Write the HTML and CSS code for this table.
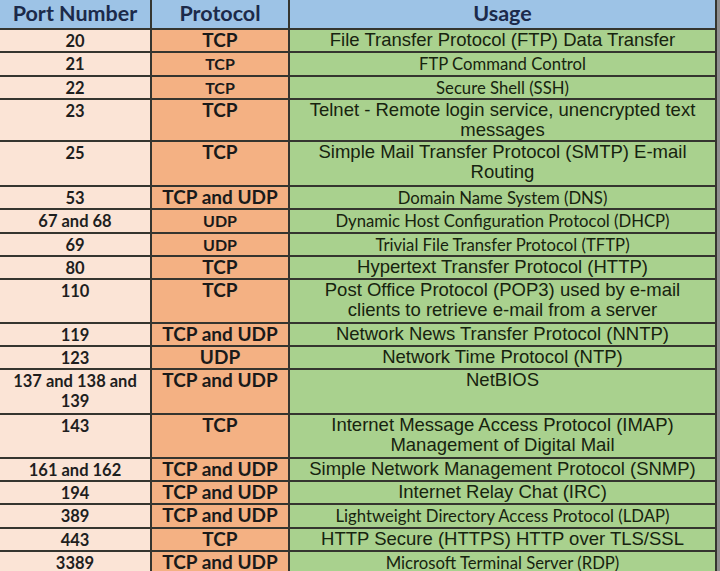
FILE: index.html
```html
<!DOCTYPE html>
<html>
<head>
<meta charset="utf-8">
<link rel="stylesheet" href="styles.css">
</head>
<body>
<table class="ports">
  <colgroup>
    <col class="c-port">
    <col class="c-proto">
    <col class="c-use">
  </colgroup>
  <thead>
    <tr class="head">
      <th class="port">Port Number</th>
      <th class="proto">Protocol</th>
      <th class="use">Usage</th>
    </tr>
  </thead>
  <tbody>
    <tr class="r1"><td class="port">20</td><td class="proto big">TCP</td><td class="use arial">File Transfer Protocol (FTP) Data Transfer</td></tr>
    <tr class="r1 h24"><td class="port">21</td><td class="proto small">TCP</td><td class="use cal">FTP Command Control</td></tr>
    <tr class="r1"><td class="port">22</td><td class="proto small">TCP</td><td class="use cal">Secure Shell (SSH)</td></tr>
    <tr class="r2 h42"><td class="port">23</td><td class="proto big">TCP</td><td class="use arial">Telnet - Remote login service, unencrypted text messages</td></tr>
    <tr class="r2"><td class="port">25</td><td class="proto big">TCP</td><td class="use arial">Simple Mail Transfer Protocol (SMTP) E-mail Routing</td></tr>
    <tr class="r1 h22"><td class="port">53</td><td class="proto big">TCP and UDP</td><td class="use cal">Domain Name System (DNS)</td></tr>
    <tr class="r1 h24"><td class="port">67 and 68</td><td class="proto small">UDP</td><td class="use cal">Dynamic Host Configuration Protocol (DHCP)</td></tr>
    <tr class="r1"><td class="port">69</td><td class="proto small">UDP</td><td class="use cal">Trivial File Transfer Protocol (TFTP)</td></tr>
    <tr class="r1"><td class="port">80</td><td class="proto big">TCP</td><td class="use arial">Hypertext Transfer Protocol (HTTP)</td></tr>
    <tr class="r2 h44"><td class="port">110</td><td class="proto big">TCP</td><td class="use arial">Post Office Protocol (POP3) used by e-mail clients to retrieve e-mail from a server</td></tr>
    <tr class="r1"><td class="port">119</td><td class="proto big">TCP and UDP</td><td class="use arial">Network News Transfer Protocol (NNTP)</td></tr>
    <tr class="r1"><td class="port">123</td><td class="proto big">UDP</td><td class="use arial">Network Time Protocol (NTP)</td></tr>
    <tr class="r2"><td class="port">137 and 138 and 139</td><td class="proto big">TCP and UDP</td><td class="use arial">NetBIOS</td></tr>
    <tr class="r2 h44"><td class="port">143</td><td class="proto big">TCP</td><td class="use arial">Internet Message Access Protocol (IMAP) Management of Digital Mail</td></tr>
    <tr class="r1"><td class="port">161 and 162</td><td class="proto big">TCP and UDP</td><td class="use arial">Simple Network Management Protocol (SNMP)</td></tr>
    <tr class="r1"><td class="port">194</td><td class="proto big">TCP and UDP</td><td class="use arial">Internet Relay Chat (IRC)</td></tr>
    <tr class="r1 h24"><td class="port">389</td><td class="proto big">TCP and UDP</td><td class="use cal">Lightweight Directory Access Protocol (LDAP)</td></tr>
    <tr class="r1"><td class="port">443</td><td class="proto big">TCP</td><td class="use arial">HTTP Secure (HTTPS) HTTP over TLS/SSL</td></tr>
    <tr class="r1"><td class="port">3389</td><td class="proto big">TCP and UDP</td><td class="use cal">Microsoft Terminal Server (RDP)</td></tr>
  </tbody>
</table>
</body>
</html>
```

FILE: styles.css
```css
html, body {
  margin: 0;
  padding: 0;
}
body {
  background: #8e8e8e;
  width: 720px;
  height: 571px;
  overflow: hidden;
}
.ports {
  border-collapse: collapse;
  table-layout: fixed;
  width: 716px;
  margin: 0;
}
.c-port { width: 151px; }
.c-proto { width: 138px; }
.c-use { width: 427px; }

.ports th,
.ports td {
  border: 2px solid #35352f;
  padding: 0 2px;
  text-align: center;
  vertical-align: top;
  overflow: hidden;
}
.ports th.port,
.ports td.port {
  border-left: 0;
}
.head { height: 29px; }
.head th {
  background: #9dc3e6;
  color: #1c2a4a;
  font-family: "Lato", "Liberation Sans", sans-serif;
  font-weight: 700;
  font-size: 21.5px;
  line-height: 27px;
  border-top: 0;
}
.ports td.port {
  background: #fbe4d6;
  color: #1e1e1e;
  font-family: "Lato", "Liberation Sans", sans-serif;
  font-weight: 700;
  font-size: 16.5px;
  line-height: 20px;
  padding-top: 1px;
}
.ports td.proto {
  background: #f4b183;
  color: #1a1a1a;
  font-family: "Lato", "Liberation Sans", sans-serif;
  font-weight: 700;
}
.ports td.proto.big { font-size: 19px; line-height: 20px; }
.ports td.proto.small { font-size: 16px; line-height: 18px; padding-top: 2px; }
.ports td.use {
  background: #a9d18e;
  color: #17230f;
  padding: 0 14px;
}
.ports td.use.arial {
  font-family: "Liberation Sans", Arial, sans-serif;
  font-size: 18.5px;
  line-height: 20px;
}
.ports td.use.cal {
  font-family: "Lato", "Liberation Sans", sans-serif;
  font-size: 16.7px;
  line-height: 20px;
  padding-top: 1px;
}
.r1 { height: 23px; }
.r2 { height: 45px; }
.h22 { height: 22px; }
.h24 { height: 24px; }
.h42 { height: 42px; }
.h44 { height: 44px; }
```
